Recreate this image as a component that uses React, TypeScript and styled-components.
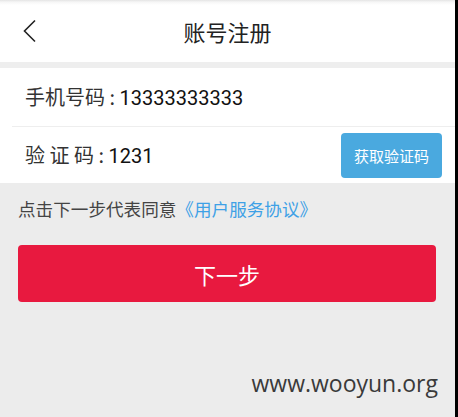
import React from "react";
import styled, { createGlobalStyle } from "styled-components";

const Global = createGlobalStyle`
  html, body { margin: 0; padding: 0; background: #ececec; }
  body { font-family: Roboto, "Noto Sans CJK SC", sans-serif; }
  * { box-sizing: border-box; }
`;

const Screen = styled.div`
  width: 458px;
  height: 417px;
  display: grid;
  grid-template-columns: 1fr 3px;
  overflow: hidden;
`;

const EdgeStrip = styled.div`
  background: #000;
`;

const Main = styled.div`
  display: flex;
  flex-direction: column;
  background: #ececec;
`;

const Header = styled.header`
  height: 62px;
  display: grid;
  grid-template-columns: 60px 1fr 60px;
  align-items: center;
  background: linear-gradient(#e4e4e4 0px, #f6f6f6 2px, #ffffff 5px);
`;

const BackButton = styled.div`
  display: flex;
  align-items: center;
  padding-left: 22px;
  height: 100%;
`;

const Title = styled.h1`
  margin: 0;
  text-align: center;
  font-family: "Noto Sans CJK SC", sans-serif;
  font-weight: 400;
  font-size: 22px;
  color: #222;
  line-height: 1;
`;

const Gap = styled.div`
  height: 6px;
  background: #eeeeee;
`;

const Form = styled.div`
  background: #fff;
  display: flex;
  flex-direction: column;
`;

const Row = styled.div<{ $h: number; $divider?: boolean }>`
  height: ${(p) => p.$h}px;
  display: flex;
  align-items: center;
  justify-content: space-between;
  padding: 0 13px 0 25px;
  position: relative;
  ${(p) =>
    p.$divider &&
    `&::after { content: ""; position: absolute; left: 12px; right: 0; bottom: 0; height: 1px; background: #eeeeee; }`}
`;

const Field = styled.div`
  display: flex;
  align-items: baseline;
  font-size: 20px;
  line-height: 1;
`;

const Label = styled.span`
  font-family: "Noto Sans CJK SC", sans-serif;
  color: #333;
  white-space: pre;
`;

const Value = styled.span`
  font-family: Roboto, sans-serif;
  color: #111;
  white-space: pre;
`;

const CodeButton = styled.button`
  width: 101px;
  height: 45px;
  border: none;
  border-radius: 4px;
  background: #4aa9df;
  color: #fff;
  font-family: "Noto Sans CJK SC", sans-serif;
  font-size: 15px;
  padding: 0;
`;

const Agreement = styled.p`
  margin: 0;
  padding: 17px 18px 0;
  height: 62px;
  font-family: "Noto Sans CJK SC", sans-serif;
  font-size: 17.6px;
  color: #444;
  line-height: 18px;
`;

const Link = styled.span`
  color: #3ea1e6;
`;

const NextButton = styled.button`
  margin: 0 19px 0 18px;
  height: 57px;
  border: none;
  border-radius: 4px;
  background: #e8193f;
  color: #fff;
  font-family: "Noto Sans CJK SC", sans-serif;
  font-size: 22px;
  padding: 0;
`;

const Watermark = styled.div`
  margin-top: 70px;
  padding-right: 17px;
  display: flex;
  justify-content: flex-end;
  font-family: "Open Sans", sans-serif;
  font-size: 23px;
  color: #3a3a3a;
  line-height: 1;
`;

export default function App() {
  return (
    <>
      <Global />
      <Screen>
        <Main>
          <Header>
            <BackButton>
              <svg width="14" height="24" viewBox="0 0 14 24">
                <path d="M13 1.5 L2.5 12 L13 22.5" fill="none" stroke="#222" strokeWidth="1.6" />
              </svg>
            </BackButton>
            <Title>账号注册</Title>
            <div />
          </Header>
          <Gap />
          <Form>
            <Row $h={59} $divider>
              <Field>
                <Label>手机号码 : </Label>
                <Value>13333333333</Value>
              </Field>
            </Row>
            <Row $h={56}>
              <Field>
                <Label>验 证 码 : </Label>
                <Value>1231</Value>
              </Field>
              <CodeButton>获取验证码</CodeButton>
            </Row>
          </Form>
          <Agreement>
            点击下一步代表同意<Link>《用户服务协议》</Link>
          </Agreement>
          <NextButton>下一步</NextButton>
          <Watermark>www.wooyun.org</Watermark>
        </Main>
        <EdgeStrip />
      </Screen>
    </>
  );
}
